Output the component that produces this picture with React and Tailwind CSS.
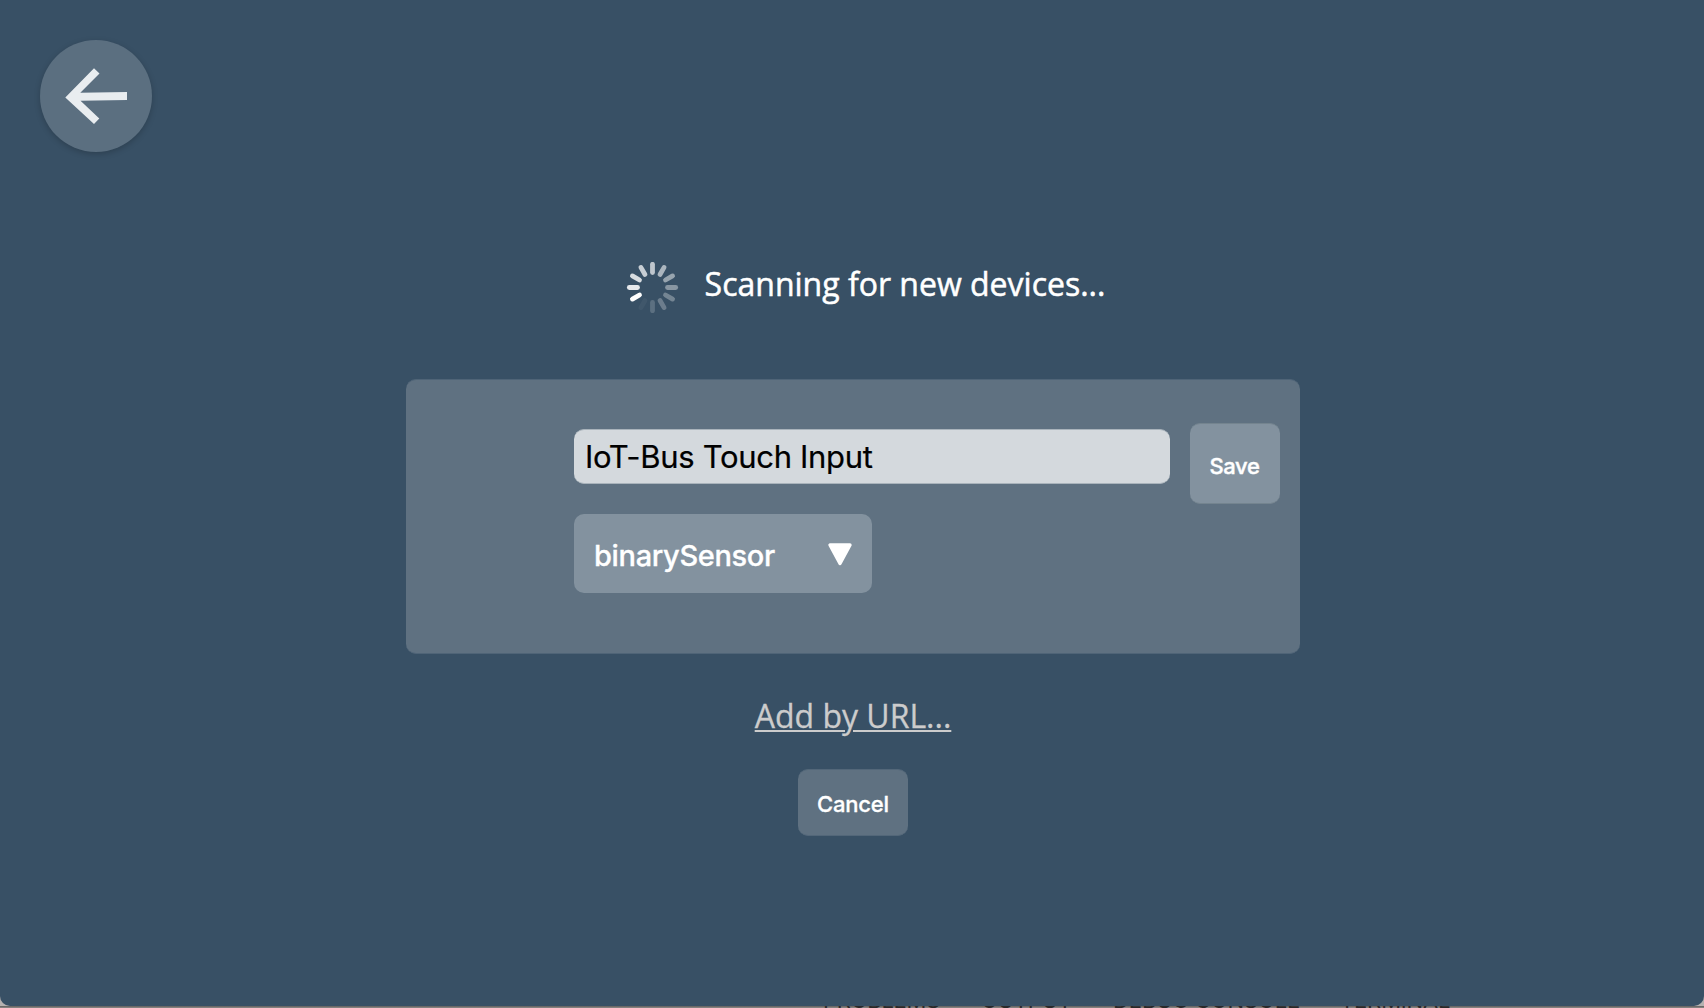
const SPOKES = [0.68, 0.58, 0.48, 0.4, 0.3, 0.26, 0.18, 0.04, 1, 0.88, 0.8, 0.72];

function Spinner() {
  return (
    <svg className="h-[51px] w-[53px] shrink-0" viewBox="-26.5 -25.5 53 51" aria-hidden="true">
      {SPOKES.map((opacity, i) => (
        <line
          key={i}
          x1="0"
          y1="-23.2"
          x2="0"
          y2="-15"
          stroke="#fff"
          strokeWidth="4.8"
          strokeLinecap="round"
          opacity={opacity}
          transform={`rotate(${i * 30})`}
        />
      ))}
    </svg>
  );
}

function BackButton() {
  return (
    <button
      aria-label="Back"
      className="block size-28 shrink-0 rounded-full bg-[#5b6f80] shadow-[0_2px_6px_rgba(0,0,0,0.2)]"
    >
      <svg className="size-28" viewBox="40 40 112 112" aria-hidden="true">
        <path
          fill="#e9edf0"
          d="M65.3 97.4 94 68.2 99.5 73.4 80.3 92.8 127 92.1V99.9L80.5 100.8 99.3 118.5 94 124Z"
        />
      </svg>
    </button>
  );
}

function DeviceCard() {
  return (
    <div className="mt-[66px] ml-[2px] flex h-[275px] w-[894px] items-start rounded-[10px] border-y border-[#4f6477] bg-[#5f7181] pl-[168px] font-[Inter,sans-serif]">
      <div className="mt-[49px] flex flex-col items-start">
        <input
          readOnly
          value="IoT-Bus Touch Input"
          className="h-[55px] w-[596px] rounded-[10px] border-y border-[#a9b3bb] bg-[#d4d9dd] pl-[11px] text-[31px] tracking-[-0.31px] text-black outline-none [-webkit-text-stroke:0.2px_currentColor]"
        />
        <button className="mt-[30px] flex h-[79px] w-[298px] items-center justify-between rounded-[10px] bg-[#83929f] pr-[19px] pl-[20px] text-[29px] font-medium tracking-[-0.35px] text-white [-webkit-text-stroke:0.3px_currentColor]">
          <span className="pt-[4px]">binarySensor</span>
          <svg className="h-[24px] w-[26px]" viewBox="0 0 26 24" aria-hidden="true">
            <path
              d="M3 3H23L13 21.5Z"
              fill="#fff"
              stroke="#fff"
              strokeWidth="3.4"
              strokeLinejoin="round"
            />
          </svg>
        </button>
      </div>
      <button className="mt-[43px] ml-[20px] h-[81px] w-[90px] rounded-[10px] border-y border-[#74848f] bg-[#83929f] pt-[5px] pr-[1px] text-[22px] font-medium tracking-[-0.4px] text-white [-webkit-text-stroke:0.4px_currentColor]">
        Save
      </button>
    </div>
  );
}

function PanelTabs() {
  return (
    <div className="flex h-[2px] items-end overflow-hidden bg-linear-to-b from-[#5f5d5c] to-[#908c8a] pl-[823px] font-[Inter,sans-serif] text-[22px] leading-[26px] whitespace-nowrap text-[#2b2a2a]">
      <span className="-mb-[5px] w-[158px] shrink-0 tracking-[-0.25px]">PROBLEMS</span>
      <span className="-mb-[5px] w-[132px] shrink-0 tracking-[-0.2px]">OUTPUT</span>
      <span className="-mb-[5px] w-[227px] shrink-0 tracking-[-0.1px]">DEBUG CONSOLE</span>
      <span className="-mb-[5px] shrink-0 tracking-[-0.15px]">TERMINAL</span>
    </div>
  );
}

export default function App() {
  return (
    <div className="h-[1008px] w-[1704px] overflow-hidden bg-[#b5b1b0]">
      <main className="flex h-[1006px] flex-col rounded-b-[10px] bg-[#385065] font-['Open_Sans',sans-serif]">
        <div className="pt-10 pl-10">
          <BackButton />
        </div>
        <div className="flex flex-col items-center">
          <div className="mt-[110px] flex items-start gap-[26px] pl-[27px]">
            <Spinner />
            <p className="text-[32px] leading-[44px] text-white [-webkit-text-stroke:0.5px_currentColor]">
              Scanning for new devices...
            </p>
          </div>
          <DeviceCard />
          <a
            href="#"
            className="mt-10 ml-[2px] text-[32px] leading-[44px] text-[#cccccc] underline decoration-2 underline-offset-2 [-webkit-text-stroke:0.3px_currentColor]"
          >
            Add by URL...
          </a>
          <button className="mt-[31px] ml-[2px] h-[67px] w-[110px] rounded-[10px] border-y border-[#536779] bg-[#5f7181] pt-[3px] font-[Inter,sans-serif] text-[22px] font-medium tracking-[-0.2px] text-white [-webkit-text-stroke:0.3px_currentColor]">
            Cancel
          </button>
        </div>
      </main>
      <PanelTabs />
    </div>
  );
}
